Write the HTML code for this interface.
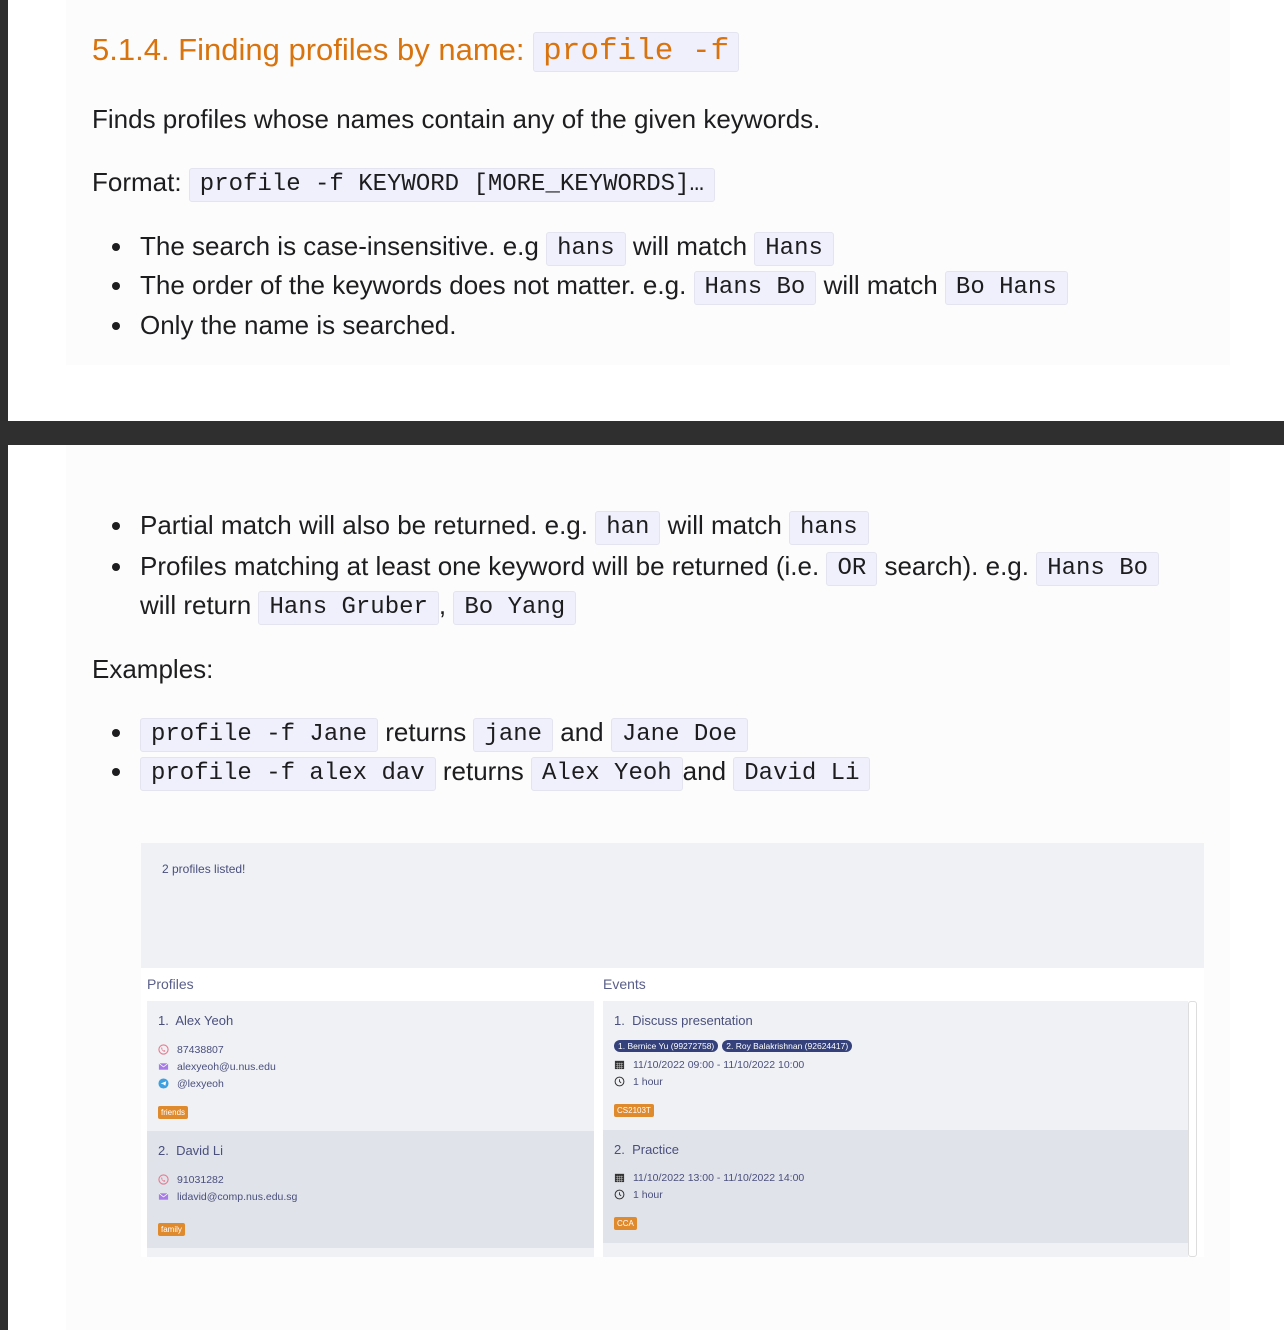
<!DOCTYPE html>
<html><head><meta charset="utf-8"><style>
*{margin:0;padding:0;box-sizing:border-box}
body{width:1284px;height:1330px;background:#fff;position:relative;overflow:hidden;font-family:"Liberation Sans",sans-serif;color:#1d1d1f}
.bar{position:absolute;left:0;top:0;width:8px;height:1330px;background:#2e2e2e}
.band{position:absolute;left:0;top:421px;width:1284px;height:24px;background:#2f2f2f}
.card{position:absolute;left:66px;width:1164px;background:#fcfcfc}
.l{position:absolute;left:92px;font-size:26px;line-height:34px;white-space:nowrap}
.b{left:140px}
.b::before{content:"";position:absolute;left:-28px;top:14px;width:8px;height:8px;border-radius:50%;background:#1d1d1f}
code{font-family:"Liberation Mono",monospace;font-size:24px;background:#eff0fb;border:1px solid #e3e4ef;border-radius:3px;padding:0 10px;display:inline-block;line-height:32px;vertical-align:1px}
h2{position:absolute;left:92px;top:30px;font-weight:normal;font-size:31px;color:#d9730d;line-height:40px;white-space:nowrap}
h2 code{font-size:31px;color:#d9730d;line-height:38px;padding:0 9px}
.app{position:absolute;left:141px;top:843px;width:1063px;height:414px;background:#fff;font-family:"Liberation Sans",sans-serif;color:#4a4f7c}
.res{position:absolute;left:0;top:0;width:1063px;height:125px;background:#eff1f5;font-size:12px;padding:19px 21px}
.hd{position:absolute;top:133px;font-size:14px;color:#5a5f8a}
.pane{position:absolute;top:158px;background:#eff1f5;height:256px}
.it{position:absolute;left:0;width:100%}
.t{position:absolute;font-size:13px;white-space:nowrap}
.s{position:absolute;font-size:10.5px;white-space:nowrap}
.tag{position:absolute;background:#e08a2e;color:#fff;font-size:8px;padding:2px 3px;border-radius:2px}
.pill{display:inline-block;background:#34417a;color:#fff;font-size:8.5px;padding:1px 4px;border-radius:7px;margin-right:4px}
.ic{position:absolute;left:11px;width:11px;height:11px}
</style></head><body>
<div class="bar"></div>
<div class="card" style="top:0;height:365px"></div>
<div class="band"></div>
<div class="card" style="top:445px;height:885px"></div>

<h2>5.1.4. Finding profiles by name: <code>profile -f</code></h2>
<div class="l" style="top:102px">Finds profiles whose names contain any of the given keywords.</div>
<div class="l" style="top:165px">Format: <code>profile -f KEYWORD [MORE_KEYWORDS]…</code></div>
<div class="l b" style="top:229px">The search is case-insensitive. e.g <code>hans</code> will match <code>Hans</code></div>
<div class="l b" style="top:268px">The order of the keywords does not matter. e.g. <code>Hans Bo</code> will match <code>Bo Hans</code></div>
<div class="l b" style="top:308px">Only the name is searched.</div>

<div class="l b" style="top:508px">Partial match will also be returned. e.g. <code>han</code> will match <code>hans</code></div>
<div class="l b" style="top:549px">Profiles matching at least one keyword will be returned (i.e. <code>OR</code> search). e.g. <code>Hans Bo</code></div>
<div class="l" style="top:588px;left:140px">will return <code>Hans Gruber</code>, <code>Bo Yang</code></div>
<div class="l" style="top:652px">Examples:</div>
<div class="l b" style="top:715px"><code>profile -f Jane</code> returns <code>jane</code> and <code>Jane Doe</code></div>
<div class="l b" style="top:754px"><code>profile -f alex dav</code> returns <code>Alex Yeoh</code>and <code>David Li</code></div>

<div class="app">
 <div class="res">2 profiles listed!</div>
 <div class="hd" style="left:6px">Profiles</div>
 <div class="hd" style="left:462px">Events</div>
 <div class="pane" style="left:6px;width:447px">
  <div class="it" style="top:0;height:130px;background:#eff1f5">
   <div class="t" style="left:11px;top:12px">1.&nbsp; Alex Yeoh</div>
   <svg class="ic" style="top:43px" viewBox="0 0 12 12"><circle cx="6" cy="6" r="5" fill="none" stroke="#e27b8f" stroke-width="1.2"/><path d="M4 3.5l1 1-.6.8c.4.9 1 1.5 1.9 1.9l.8-.6 1 1-.8.9C5.6 8.3 3.7 6.4 3.5 4.3z" fill="#e27b8f"/></svg>
   <div class="s" style="left:30px;top:43px">87438807</div>
   <svg class="ic" style="top:60px" viewBox="0 0 12 12"><rect x="1" y="2.5" width="10" height="7" fill="#a77ae8"/><path d="M1 2.5l5 4 5-4" stroke="#fff" fill="none" stroke-width=".8"/></svg>
   <div class="s" style="left:30px;top:60px">alexyeoh@u.nus.edu</div>
   <svg class="ic" style="top:77px" viewBox="0 0 12 12"><circle cx="6" cy="6" r="5.5" fill="#3ea0e0"/><path d="M3 6l6-2.5-1 5-2-1.5z" fill="#fff"/></svg>
   <div class="s" style="left:30px;top:77px">@lexyeoh</div>
   <div class="tag" style="left:11px;top:105px">friends</div>
  </div>
  <div class="it" style="top:130px;height:117px;background:#e0e3ea">
   <div class="t" style="left:11px;top:12px">2.&nbsp; David Li</div>
   <svg class="ic" style="top:43px" viewBox="0 0 12 12"><circle cx="6" cy="6" r="5" fill="none" stroke="#e27b8f" stroke-width="1.2"/><path d="M4 3.5l1 1-.6.8c.4.9 1 1.5 1.9 1.9l.8-.6 1 1-.8.9C5.6 8.3 3.7 6.4 3.5 4.3z" fill="#e27b8f"/></svg>
   <div class="s" style="left:30px;top:43px">91031282</div>
   <svg class="ic" style="top:60px" viewBox="0 0 12 12"><rect x="1" y="2.5" width="10" height="7" fill="#a77ae8"/><path d="M1 2.5l5 4 5-4" stroke="#fff" fill="none" stroke-width=".8"/></svg>
   <div class="s" style="left:30px;top:60px">lidavid@comp.nus.edu.sg</div>
   <div class="tag" style="left:11px;top:92px">family</div>
  </div>
 </div>
 <div class="pane" style="left:462px;width:585px">
  <div class="it" style="top:0;height:129px;background:#eff1f5">
   <div class="t" style="left:11px;top:12px">1.&nbsp; Discuss presentation</div>
   <div style="position:absolute;left:11px;top:35px;white-space:nowrap"><span class="pill">1. Bernice Yu (99272758)</span><span class="pill">2. Roy Balakrishnan (92624417)</span></div>
   <svg class="ic" style="top:58px" viewBox="0 0 12 12"><rect x="1" y="2" width="10" height="9" fill="#333"/><path d="M2 5h8M2 7h8M2 9h8M4 4v7M6 4v7M8 4v7" stroke="#ccc" stroke-width=".5"/></svg>
   <div class="s" style="left:30px;top:58px">11/10/2022 09:00 - 11/10/2022 10:00</div>
   <svg class="ic" style="top:75px" viewBox="0 0 12 12"><circle cx="6" cy="6" r="4.8" fill="none" stroke="#333" stroke-width="1.1"/><path d="M6 3.5V6l1.8 1.5" stroke="#333" fill="none"/></svg>
   <div class="s" style="left:30px;top:75px">1 hour</div>
   <div class="tag" style="left:11px;top:103px">CS2103T</div>
  </div>
  <div class="it" style="top:129px;height:113px;background:#e0e3ea">
   <div class="t" style="left:11px;top:12px">2.&nbsp; Practice</div>
   <svg class="ic" style="top:42px" viewBox="0 0 12 12"><rect x="1" y="2" width="10" height="9" fill="#333"/><path d="M2 5h8M2 7h8M2 9h8M4 4v7M6 4v7M8 4v7" stroke="#ccc" stroke-width=".5"/></svg>
   <div class="s" style="left:30px;top:42px">11/10/2022 13:00 - 11/10/2022 14:00</div>
   <svg class="ic" style="top:59px" viewBox="0 0 12 12"><circle cx="6" cy="6" r="4.8" fill="none" stroke="#333" stroke-width="1.1"/><path d="M6 3.5V6l1.8 1.5" stroke="#333" fill="none"/></svg>
   <div class="s" style="left:30px;top:59px">1 hour</div>
   <div class="tag" style="left:11px;top:87px">CCA</div>
  </div>
  <div style="position:absolute;left:585px;top:0;width:9px;height:256px;background:#fff;border:1px solid #ddd;border-radius:3px"></div>
 </div>
</div>
</body></html>
